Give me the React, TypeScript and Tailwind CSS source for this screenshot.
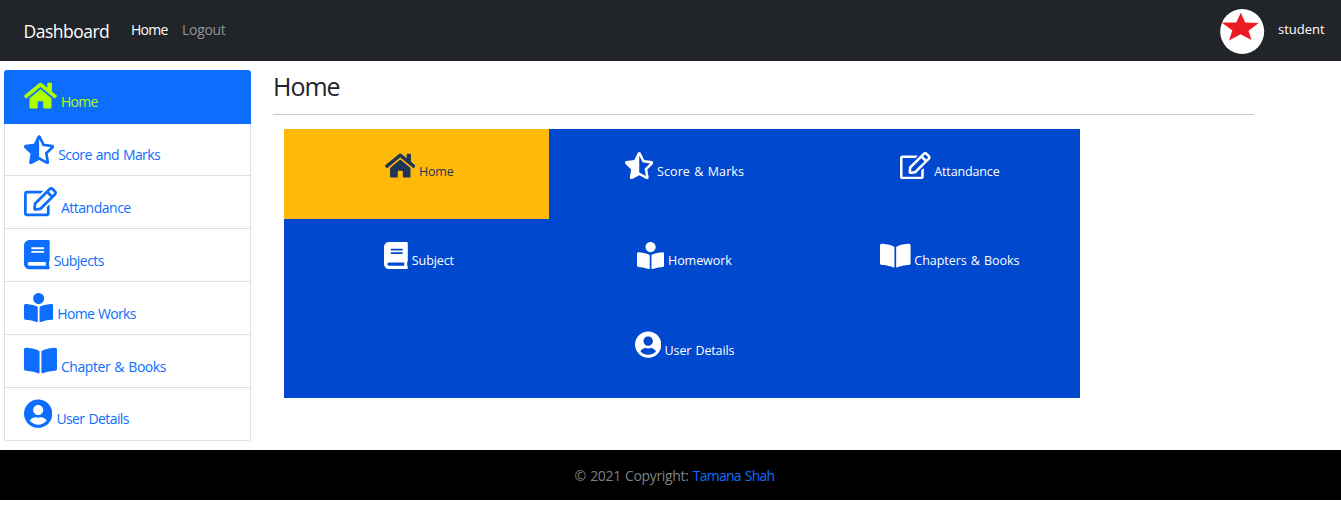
import React from "react";
import type { IconType } from "react-icons";
import { FaBook, FaBookOpen, FaBookReader, FaHome, FaRegEdit, FaStarHalfAlt, FaUserCircle } from "react-icons/fa";

type Entry = { icon: IconType; label: string; iconClass: string; labelClass: string; active?: boolean };

const menu: Entry[] = [
  { icon: FaHome, label: "Home", iconClass: "w-[33px]", labelClass: "tracking-[-0.7px]", active: true },
  { icon: FaStarHalfAlt, label: "Score and Marks", iconClass: "w-[30.3px]", labelClass: "tracking-[-0.6px] [word-spacing:1px]" },
  { icon: FaRegEdit, label: "Attandance", iconClass: "w-[33px]", labelClass: "tracking-[-0.5px]" },
  { icon: FaBook, label: "Subjects", iconClass: "w-[25.7px]", labelClass: "tracking-[-0.55px]" },
  { icon: FaBookReader, label: "Home Works", iconClass: "w-[29.3px]", labelClass: "tracking-[-0.7px] [word-spacing:1px]" },
  { icon: FaBookOpen, label: "Chapter & Books", iconClass: "w-[33px]", labelClass: "tracking-[-0.45px] [word-spacing:1px]" },
  { icon: FaUserCircle, label: "User Details", iconClass: "w-[28.4px]", labelClass: "tracking-[-0.6px] [word-spacing:1px]" },
];

const tiles: (Entry | null)[] = [
  { icon: FaHome, label: "Home", iconClass: "w-[30.6px]", labelClass: "tracking-[-0.2px]", active: true },
  { icon: FaStarHalfAlt, label: "Score & Marks", iconClass: "w-[28.5px]", labelClass: "tracking-[0.08px] [word-spacing:1px]" },
  { icon: FaRegEdit, label: "Attandance", iconClass: "w-[30.6px]", labelClass: "tracking-[-0.15px]" },
  { icon: FaBook, label: "Subject", iconClass: "w-[23.8px]", labelClass: "tracking-[-0.1px]" },
  { icon: FaBookReader, label: "Homework", iconClass: "w-[27.2px]", labelClass: "tracking-[-0.05px]" },
  { icon: FaBookOpen, label: "Chapters & Books", iconClass: "w-[30.6px]", labelClass: "tracking-[-0.05px] [word-spacing:1px]" },
  null,
  { icon: FaUserCircle, label: "User Details", iconClass: "w-[26.4px]", labelClass: "tracking-[-0.12px] [word-spacing:1px]" },
  null,
];

function MenuRow({ entry, last }: { entry: Entry; last: boolean }) {
  const Icon = entry.icon;
  const tone = entry.active ? "h-[53.67px] bg-[#0d6efd] text-[#b0ff00] rounded-t-[3px] pt-[11px] pl-5" : "h-[52.83px] border-x border-b border-[#dfdfdf] text-[#0d6efd] pt-[11px] pl-[19px]";
  return (
    <li className={`flex items-start gap-1 ${tone} ${last ? "rounded-b-[3px]" : ""}`}>
      <Icon className={`h-[29.3px] shrink-0 ${entry.iconClass}`} />
      <a className={`mt-[10.6px] text-[14px] leading-5 whitespace-nowrap ${entry.labelClass}`}>{entry.label}</a>
    </li>
  );
}

function Tile({ entry }: { entry: Entry | null }) {
  if (!entry) return <div />;
  const Icon = entry.icon;
  return (
    <div className={`flex items-start justify-center gap-[3.6px] pt-[23px] pl-[5px] ${entry.active ? "bg-[#ffb908] text-[#1f3558]" : "text-white"}`}>
      <Icon className={`h-[27.2px] shrink-0 ${entry.iconClass}`} />
      <span className={`mt-[9.6px] text-[12.5px] leading-5 whitespace-nowrap ${entry.labelClass}`}>{entry.label}</span>
    </div>
  );
}

export default function App() {
  return (
    <div className="flex h-[515px] flex-col bg-white font-['Open_Sans','Noto_Sans',sans-serif] text-[#212529]">
      <nav className="flex h-[61px] shrink-0 items-center bg-[#212529] pr-4 pl-[23.5px] text-[14px] leading-5">
        <span className="w-[107.5px] text-[17.5px] tracking-[-0.5px] text-white">Dashboard</span>
        <a className="-mt-px w-[51px] tracking-[-0.7px] text-white">Home</a>
        <a className="-mt-px tracking-[-0.3px] text-[#909294]">Logout</a>
        <div className="ml-auto flex items-center gap-[13px]">
          <svg className="mt-0.5 size-[45px]" viewBox="0 0 45 45">
            <ellipse cx="22.2" cy="22.5" rx="22" ry="22.5" fill="#fff" />
            <path d="M20.8 3.8 25.2 13.6 38.7 14 28.5 21.8 31.5 31 20.6 25.3 9 31.5 12.4 21.6 1.6 13.4 16.2 13.6Z" fill="#ed1c24" />
          </svg>
          <span className="-mt-1 w-[47px] text-[13px] whitespace-nowrap text-white">student</span>
        </div>
      </nav>
      <div className="flex h-[389px] shrink-0">
        <ul className="mt-[9px] ml-1 w-[247px] shrink-0">
          {menu.map((entry, i) => (
            <MenuRow key={entry.label} entry={entry} last={i === menu.length - 1} />
          ))}
        </ul>
        <main className="ml-[22px] w-[981px]">
          <h1 className="flex h-[54px] items-start border-b border-[#c8c8c9] pt-[9px] text-[25px] leading-[33px] tracking-[-1px]">Home</h1>
          <div className="mt-[14px] ml-[11px] grid h-[269px] w-[796px] grid-cols-3 grid-rows-3 bg-[#0048cd]">
            {tiles.map((entry, i) => (
              <Tile key={i} entry={entry} />
            ))}
          </div>
        </main>
      </div>
      <footer className="flex h-[50px] shrink-0 items-start justify-center bg-black pt-4 pl-2 text-[14px] leading-5 text-[#808080]">
        <p className="tracking-[-0.35px] whitespace-pre [word-spacing:1px]">© 2021 Copyright: <a className="tracking-[-0.75px] text-[#0d6efd]">Tamana Shah</a></p>
      </footer>
    </div>
  );
}
